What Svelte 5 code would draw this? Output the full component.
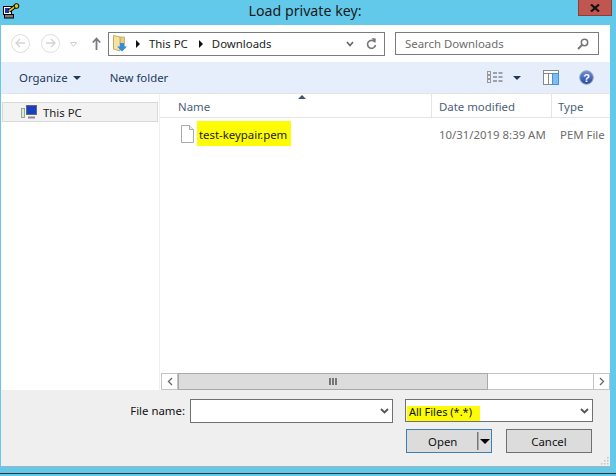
<script>
	let fileName = '';
</script>

<div class="window">
	<header class="titlebar">
		<svg class="app-icon" width="18" height="16" viewBox="0 0 18 16">
			<rect x="1.500" y="3.500" width="8" height="8" fill="#fff" stroke="#000" />
			<rect x="3" y="5" width="4" height="5" fill="#1a2fc0" />
			<rect x="2.500" y="11.500" width="9" height="3.500" fill="#7d7d7d" stroke="#000" />
			<path d="M7 8 L13 3.500" stroke="#000" stroke-width="3.600" />
			<path d="M7 8 L13 3.500" stroke="#d8c820" stroke-width="1.600" />
			<circle cx="14.500" cy="3" r="2.400" fill="#d8c820" stroke="#000" />
		</svg>
		<span class="title">Load private key:</span>
		<button class="close" aria-label="Close">
			<svg width="10" height="8" viewBox="0 0 10 8"><path d="M1 0.500 L9 7.500 M9 0.500 L1 7.500" stroke="#111" stroke-width="2.200" /></svg>
		</button>
	</header>

	<div class="dialog">
		<div class="nav">
			<div class="round">
				<svg width="11" height="10" viewBox="0 0 11 10"><path d="M5 1 L1 5 L5 9 M1 5 H10" fill="none" stroke="#d4d4d4" stroke-width="1.400" /></svg>
			</div>
			<div class="round second">
				<svg width="11" height="10" viewBox="0 0 11 10"><path d="M6 1 L10 5 L6 9 M10 5 H1" fill="none" stroke="#d4d4d4" stroke-width="1.400" /></svg>
			</div>
			<svg class="history" width="7" height="5" viewBox="0 0 7 5"><path d="M0.500 0.500 H6.500 L3.500 4.500 Z" fill="none" stroke="#cfcfcf" /></svg>
			<svg class="up" width="9" height="13" viewBox="0 0 9 13"><path d="M4.500 13 V2 M0.800 5.500 L4.500 1.500 L8.200 5.500" fill="none" stroke="#7a7a7a" stroke-width="1.800" /></svg>
			<div class="address">
				<svg class="folder" width="15" height="17" viewBox="0 0 15 17">
					<path d="M7 2 H11.500 V12 H7 Z" fill="#e9cf83" stroke="#c7a95a" stroke-width="0.800" />
					<path d="M0.500 0.500 L7 2 V16 L0.500 14 Z" fill="#f5e3a6" stroke="#c7a95a" />
					<path d="M7 8 H11 V11.500 H14 L9 16.500 L4 11.500 H7 Z" fill="#2f8fdc" />
				</svg>
				<span class="crumb-arrow"></span>
				<span>This PC</span>
				<span class="crumb-arrow"></span>
				<span>Downloads</span>
				<svg class="chev" width="8" height="6" viewBox="0 0 8 6"><path d="M1 1 L4 4.500 L7 1" fill="none" stroke="#666" stroke-width="1.600" /></svg>
				<svg class="refresh" width="11" height="12" viewBox="0 0 11 12"><path d="M8.800 4 A4 4 0 1 0 9.500 7" fill="none" stroke="#777" stroke-width="1.600" /><path d="M5.500 0 L9.800 0.500 L9.500 5 Z" fill="#777" /></svg>
			</div>
			<div class="search">
				<span>Search Downloads</span>
				<svg width="12" height="12" viewBox="0 0 12 12"><circle cx="7.500" cy="4.500" r="3.200" fill="none" stroke="#777" stroke-width="1.500" /><path d="M5 7 L1 11" stroke="#777" stroke-width="2" /></svg>
			</div>
		</div>

		<div class="toolbar">
			<span class="tool">Organize</span>
			<span class="caret"></span>
			<span class="tool newfolder">New folder</span>
			<svg class="views" width="16" height="13" viewBox="0 0 16 13">
				<rect x="0.500" y="0.500" width="3" height="3" fill="none" stroke="#999" />
				<rect x="0.500" y="4.500" width="3" height="3" fill="none" stroke="#999" />
				<rect x="0.500" y="8.500" width="3" height="3" fill="none" stroke="#999" />
				<path d="M6 2 H10 M11.500 2 H15.500 M6 6 H10 M11.500 6 H15.500 M6 10 H10 M11.500 10 H15.500" stroke="#555" />
			</svg>
			<span class="caret views-caret"></span>
			<svg class="pane" width="16" height="15" viewBox="0 0 16 15">
				<rect x="0.500" y="0.500" width="15" height="14" fill="#fff" stroke="#888" />
				<path d="M0.500 3.500 H15.500 M5.500 3.500 V14.500" stroke="#888" />
				<rect x="9.500" y="3.500" width="6" height="11" fill="#7fbdf0" stroke="#3d94e0" />
			</svg>
			<svg class="help" width="15" height="15" viewBox="0 0 15 15">
				<defs>
					<linearGradient id="helpfill" x1="0" y1="0" x2="0" y2="1">
						<stop offset="0" stop-color="#6f8fd6" />
						<stop offset="1" stop-color="#2347a5" />
					</linearGradient>
				</defs>
				<circle cx="7.500" cy="7.500" r="6.800" fill="url(#helpfill)" stroke="#9aa3b5" />
				<text x="7.500" y="11.500" text-anchor="middle" font-size="11" font-weight="700" font-family="Liberation Sans" fill="#fff">?</text>
			</svg>
		</div>

		<div class="panes">
			<aside class="sidebar">
				<div class="tree-row">
					<svg width="16" height="14" viewBox="0 0 16 14">
						<rect x="0.500" y="3.500" width="3" height="9" fill="#e2e8d8" stroke="#8a9" />
						<rect x="5.500" y="0.500" width="10" height="9" fill="#1a3fc0" stroke="#667" />
						<path d="M7 12.500 H14" stroke="#889" stroke-width="2" />
					</svg>
					<span>This PC</span>
				</div>
			</aside>
			<section class="files">
				<div class="sort-mark"></div>
				<div class="columns">
					<div class="col name">Name</div>
					<div class="col date">Date modified</div>
					<div class="col type">Type</div>
				</div>
				<div class="file-row">
					<svg class="file-icon" width="13" height="18" viewBox="0 0 13 18">
						<path d="M0.500 0.500 H8.500 L12.500 4.500 V17.500 H0.500 Z" fill="#fff" stroke="#aaa" />
						<path d="M8.500 0.500 V4.500 H12.500" fill="#eee" stroke="#aaa" />
					</svg>
					<span class="mark file-name">test-keypair.pem</span>
					<span class="file-date">10/31/2019 8:39 AM</span>
					<span class="file-type">PEM File</span>
				</div>
				<div class="hscroll">
					<div class="sbtn">
						<svg width="6" height="9" viewBox="0 0 6 9"><path d="M5 1 L1.500 4.500 L5 8" fill="none" stroke="#666" stroke-width="1.300" /></svg>
					</div>
					<div class="thumb">
						<svg width="8" height="7" viewBox="0 0 8 7"><path d="M1 0 V7 M4 0 V7 M7 0 V7" stroke="#555" stroke-width="1.500" /></svg>
					</div>
					<div class="rail"></div>
					<div class="sbtn right">
						<svg width="6" height="9" viewBox="0 0 6 9"><path d="M1 1 L4.500 4.500 L1 8" fill="none" stroke="#666" stroke-width="1.300" /></svg>
					</div>
				</div>
			</section>
		</div>

		<footer class="bottom">
			<div class="line">
				<label for="fname">File name:</label>
				<div class="combo name-combo">
					<input id="fname" bind:value={fileName} />
					<svg width="9" height="6" viewBox="0 0 9 6"><path d="M1 1 L4.500 4.500 L8 1" fill="none" stroke="#555" stroke-width="1.800" /></svg>
				</div>
				<div class="combo filter-combo">
					<span class="mark filter">All Files (*.*)</span>
					<svg width="9" height="6" viewBox="0 0 9 6"><path d="M1 1 L4.500 4.500 L8 1" fill="none" stroke="#555" stroke-width="1.800" /></svg>
				</div>
			</div>
			<div class="buttons">
				<button class="btn open">
					<span class="open-label">Open</span>
					<span class="split"></span>
					<span class="split-caret"></span>
				</button>
				<button class="btn cancel">Cancel</button>
			</div>
			<svg class="grip" width="8" height="8" viewBox="0 0 8 8"><path d="M6 0 h1.500 v1.500 h-1.500 Z M3 3 h1.500 v1.500 h-1.500 Z M6 3 h1.500 v1.500 h-1.500 Z M0 6 h1.500 v1.500 h-1.500 Z M3 6 h1.500 v1.500 h-1.500 Z M6 6 h1.500 v1.500 h-1.500 Z" fill="#c4c4c4" /></svg>
		</footer>
	</div>
	<div class="edge"></div>
</div>

<style>
	:global(body) {
		margin: 0;
		background: #fff;
	}

	.window {
		width: 616px;
		height: 476px;
		overflow: hidden;
		display: flex;
		flex-direction: column;
		background: #63c9ea;
		font-family: "Noto Sans", "Open Sans", sans-serif;
		font-size: 11.4px;
		color: #111;
	}

	.titlebar {
		height: 25px;
		flex: none;
		display: flex;
		align-items: flex-start;
		position: relative;
	}

	.app-icon {
		margin: 3px 0 0 2px;
	}

	.title {
		position: absolute;
		left: -3px;
		right: 3px;
		top: 1px;
		text-align: center;
		font-size: 14.2px;
		line-height: 20px;
		color: #1a1a1a;
	}

	.close {
		position: absolute;
		left: 578px;
		top: 0;
		width: 34px;
		height: 16px;
		padding: 0;
		border: 1px solid #8b3d38;
		border-top: none;
		background: #c0564f;
		display: flex;
		align-items: center;
		justify-content: center;
	}

	.dialog {
		width: 609px;
		height: 442px;
		margin-left: 1px;
		flex: none;
		display: flex;
		flex-direction: column;
		background: #fff;
		border-bottom: 1px solid #a6b4ba;
		box-sizing: border-box;
	}

	.nav {
		height: 37px;
		flex: none;
		display: flex;
		align-items: center;
		padding-left: 10px;
		box-sizing: border-box;
	}

	.round {
		width: 19px;
		height: 19px;
		box-sizing: border-box;
		border: 1px solid #dedede;
		border-radius: 50%;
		display: flex;
		align-items: center;
		justify-content: center;
		margin-top: -1px;
	}

	.round.second {
		margin-left: 11px;
	}

	.history {
		margin-left: 10px;
		margin-top: 2px;
	}

	.up {
		margin-left: 15px;
	}

	.address {
		width: 277px;
		height: 24px;
		margin-left: 7px;
		box-sizing: border-box;
		border: 1px solid #7b7b7b;
		display: flex;
		align-items: center;
		color: #222;
	}

	.folder {
		margin-left: 4px;
	}

	.crumb-arrow {
		width: 0;
		height: 0;
		margin: 0 9px 0 8px;
		border-left: 4px solid #111;
		border-top: 4px solid transparent;
		border-bottom: 4px solid transparent;
	}

	.crumb-arrow + span + .crumb-arrow {
		margin-left: 11px;
	}

	.chev {
		margin-left: auto;
	}

	.refresh {
		margin: 0 7px 0 12px;
	}

	.search {
		width: 204px;
		height: 23px;
		margin-left: 10px;
		box-sizing: border-box;
		border: 1px solid #7b7b7b;
		display: flex;
		align-items: center;
		justify-content: space-between;
		padding: 0 9px;
		color: #6d6d6d;
	}

	.toolbar {
		height: 31px;
		flex: none;
		display: flex;
		align-items: center;
		background: #e6eefc;
		padding-left: 18px;
		box-sizing: border-box;
		color: #1e395b;
	}

	.caret {
		width: 0;
		height: 0;
		margin-left: 5px;
		border-top: 4px solid #1e395b;
		border-left: 4px solid transparent;
		border-right: 4px solid transparent;
	}

	.newfolder {
		margin-left: 29px;
	}

	.views {
		margin-left: auto;
	}

	.views-caret {
		margin-left: 10px;
	}

	.pane {
		margin-left: 22px;
	}

	.help {
		margin: 0 16px 0 20px;
	}

	.panes {
		flex: 1;
		min-height: 0;
		display: flex;
		border-top: 1px solid #e4e4e4;
	}

	.sidebar {
		width: 159px;
		flex: none;
		box-sizing: border-box;
		border-right: 1px solid #f0f0f0;
		padding: 8px 1px 0 1px;
	}

	.tree-row {
		height: 20px;
		box-sizing: border-box;
		border: 1px solid #d9d9d9;
		background: #f2f2f2;
		display: flex;
		align-items: center;
		gap: 6px;
		padding-left: 18px;
		color: #222;
	}

	.files {
		flex: 1;
		min-width: 0;
		display: flex;
		flex-direction: column;
		position: relative;
	}

	.sort-mark {
		position: absolute;
		left: 138px;
		top: 1px;
		width: 0;
		height: 0;
		border-bottom: 4px solid #44546a;
		border-left: 4px solid transparent;
		border-right: 4px solid transparent;
	}

	.columns {
		height: 24px;
		flex: none;
		display: flex;
		box-sizing: border-box;
		border-bottom: 1px solid #e4e4e4;
		color: #4c607a;
		line-height: 25px;
	}

	.col {
		box-sizing: border-box;
	}

	.col.name {
		width: 272px;
		padding-left: 18px;
		border-right: 1px solid #e4e4e4;
	}

	.col.date {
		width: 120px;
		padding-left: 7px;
		border-right: 1px solid #e4e4e4;
	}

	.col.type {
		padding-left: 6px;
	}

	.file-row {
		flex: 1;
		display: flex;
		align-items: flex-start;
		padding-top: 3px;
	}

	.file-icon {
		margin: 4px 0 0 21px;
		flex: none;
	}

	.mark {
		background: #fdfc06;
	}

	.file-name {
		width: 94px;
		height: 25px;
		line-height: 28px;
		margin-left: 3px;
		box-sizing: border-box;
		padding-left: 2px;
		flex: none;
		white-space: nowrap;
		color: #222;
	}

	.file-date {
		margin-left: 148px;
		line-height: 28px;
		color: #6d6d6d;
		width: 120px;
		flex: none;
		white-space: nowrap;
	}

	.file-type {
		margin-left: 1px;
		line-height: 28px;
		color: #6d6d6d;
		white-space: nowrap;
	}

	.hscroll {
		height: 17px;
		flex: none;
		display: flex;
		box-sizing: border-box;
		margin-left: 1px;
		background: #fff;
	}

	.sbtn {
		width: 17px;
		flex: none;
		box-sizing: border-box;
		border: 1px solid #c4c4c4;
		display: flex;
		align-items: center;
		justify-content: center;
	}

	.thumb {
		width: 310px;
		flex: none;
		box-sizing: border-box;
		background: #dcdcdc;
		border: 1px solid #a9a9a9;
		display: flex;
		align-items: center;
		justify-content: center;
	}

	.rail {
		flex: 1;
		border-top: 1px solid #c4c4c4;
		border-bottom: 1px solid #c4c4c4;
	}

	.bottom {
		height: 76px;
		flex: none;
		box-sizing: border-box;
		background: #efefef;
		padding-top: 9px;
		position: relative;
	}

	.line {
		display: flex;
		align-items: flex-start;
	}

	label {
		width: 184px;
		text-align: right;
		line-height: 24px;
		margin-right: 5px;
		color: #111;
	}

	.combo {
		box-sizing: border-box;
		height: 24px;
		border: 1px solid #707070;
		background: #fff;
		display: flex;
		align-items: center;
		justify-content: space-between;
		padding-right: 3px;
	}

	.name-combo {
		width: 203px;
	}

	.name-combo input {
		flex: 1;
		min-width: 0;
		border: none;
		outline: none;
		padding: 0 3px;
		background: none;
		font: inherit;
	}

	.filter-combo {
		width: 188px;
		height: 23px;
		margin-left: 12px;
		padding-left: 1px;
	}

	.filter {
		width: 73px;
		height: 15px;
		line-height: 12px;
		padding-left: 2px;
		box-sizing: border-box;
		align-self: flex-end;
		font-size: 11px;
		white-space: nowrap;
	}

	.buttons {
		display: flex;
		gap: 14px;
		margin: 6px 0 0 405px;
	}

	.btn {
		width: 86px;
		height: 24px;
		padding: 0;
		box-sizing: border-box;
		border: 1px solid #707070;
		background: #dcdcdc;
		font: inherit;
		color: #111;
	}

	.open {
		border-color: #3c7fb1;
		position: relative;
		display: block;
	}

	.open-label {
		position: absolute;
		left: 21px;
		top: 4px;
	}

	.split {
		position: absolute;
		right: 12px;
		top: 2px;
		bottom: 2px;
		width: 1px;
		background: #777;
		border-right: 1px solid #aaa;
	}

	.split-caret {
		position: absolute;
		right: 1px;
		top: 9px;
		width: 0;
		height: 0;
		border-top: 5px solid #000;
		border-left: 5px solid transparent;
		border-right: 5px solid transparent;
	}

	.grip {
		position: absolute;
		right: 1px;
		bottom: 1px;
	}

	.edge {
		margin-top: 6px;
		height: 1px;
		background: #333;
		flex: none;
	}
</style>
